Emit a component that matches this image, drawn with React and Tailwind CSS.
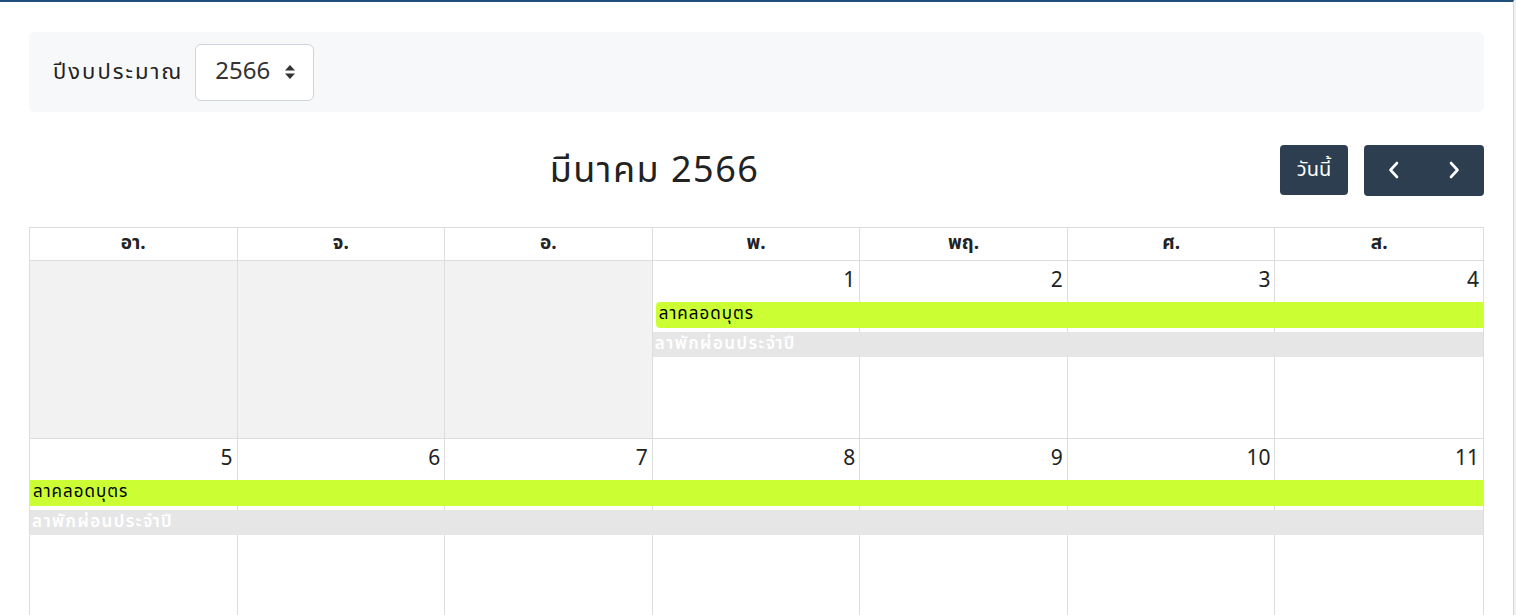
import React from "react";

const font = { fontFamily: '"Noto Sans Thai", "Noto Sans", "Liberation Sans", sans-serif' };

const dayNames = ["อา.", "จ.", "อ.", "พ.", "พฤ.", "ศ.", "ส."];
const colStart = ["col-start-1", "col-start-2", "col-start-3", "col-start-4", "col-start-5", "col-start-6", "col-start-7"];

const weeks = [
  { days: [null, null, null, 1, 2, 3, 4], start: "col-start-4", span: "col-span-4", rounded: "ml-[3px] rounded-l-[4px]" },
  { days: [5, 6, 7, 8, 9, 10, 11], start: "col-start-1", span: "col-span-7", rounded: "" },
];

function Chevron({ dir }) {
  return (
    <svg width="14" height="20" viewBox="0 0 14 20" fill="none" stroke="white" strokeWidth="2.6" strokeLinecap="round" strokeLinejoin="round">
      {dir === "left" ? <path d="M10 3 L3.5 10 L10 17" /> : <path d="M4 3 L10.5 10 L4 17" />}
    </svg>
  );
}

function Week({ week }) {
  return (
    <div className="grid grid-cols-7 grid-rows-[41px_30px_25px_1fr] h-[178px] border-b border-[#dddddd]">
      {week.days.map((d, i) => (
        <div
          key={i}
          className={`${colStart[i]} row-start-1 row-span-4 ${i < 6 ? "border-r border-[#dddddd]" : ""} ${d === null ? "bg-[#f2f2f2]" : "bg-white"} flex justify-end`}
        >
          {d !== null && <span className="text-[21px] leading-[36px] pr-[4px] pt-[2px] text-[#222]">{d}</span>}
        </div>
      ))}
      <div className={`${week.start} ${week.span} row-start-2 h-[26px] bg-[#ccff33] ${week.rounded} z-10 flex items-center pl-[3px] text-[17px] tracking-[1px] text-black`}>
        ลาคลอดบุตร
      </div>
      <div className={`${week.start} ${week.span} row-start-3 h-[25px] bg-[#e6e6e6] z-10 flex items-center pl-[2px] text-[17px] tracking-[1.4px] font-semibold text-white`}>
        ลาพักผ่อนประจำปี
      </div>
    </div>
  );
}

export default function App() {
  return (
    <div className="w-[1516px] h-[615px] overflow-hidden bg-[#f0f0f0]" style={font}>
      <div className="w-[1514px] h-[615px] bg-white border-t-2 border-[#1d4f7a] border-r border-r-[#d6d6d6] px-[29px] pt-[30px]">
        {/* filter bar */}
        <div className="h-[80px] bg-[#f7f8fa] rounded-[6px] flex items-center pl-[24px] gap-[12px]">
          <span className="text-[22px] tracking-[2px] text-[#222]">ปีงบประมาณ</span>
          <div className="w-[119px] h-[57px] bg-white border border-[#ced4da] rounded-[6px] flex items-center pl-[19px] gap-[14px]">
            <span className="text-[24px] text-[#333]">2566</span>
            <svg width="12" height="16" viewBox="0 0 12 16" fill="#333">
              <path d="M6 1 L11 6.5 H1 Z" />
              <path d="M6 15 L11 9.5 H1 Z" />
            </svg>
          </div>
        </div>

        {/* toolbar */}
        <div className="flex justify-between items-center mt-[32px] h-[52px]">
          <div />
          <h2 className="text-[36px] tracking-[1.5px] text-[#222] leading-none pt-[2px]">มีนาคม 2566</h2>
          <div className="flex gap-[16px]">
            <button className="h-[50px] w-[68px] bg-[#2c3e50] rounded-[4px] text-white text-[20px]">วันนี้</button>
            <div className="flex h-[51px] bg-[#2c3e50] rounded-[4px]">
              <button className="w-[60px] flex items-center justify-center"><Chevron dir="left" /></button>
              <button className="w-[60px] flex items-center justify-center"><Chevron dir="right" /></button>
            </div>
          </div>
        </div>

        {/* calendar */}
        <div className="mt-[31px] border border-[#dddddd] border-b-0">
          <div className="grid grid-cols-7 h-[33px] border-b border-[#dddddd]">
            {dayNames.map((n, i) => (
              <div key={n} className={`${i < 6 ? "border-r border-[#dddddd]" : ""} flex items-center justify-center text-[19px] font-bold text-[#222]`}>
                {n}
              </div>
            ))}
          </div>
          {weeks.map((w, i) => (
            <Week key={i} week={w} />
          ))}
        </div>
      </div>
    </div>
  );
}
